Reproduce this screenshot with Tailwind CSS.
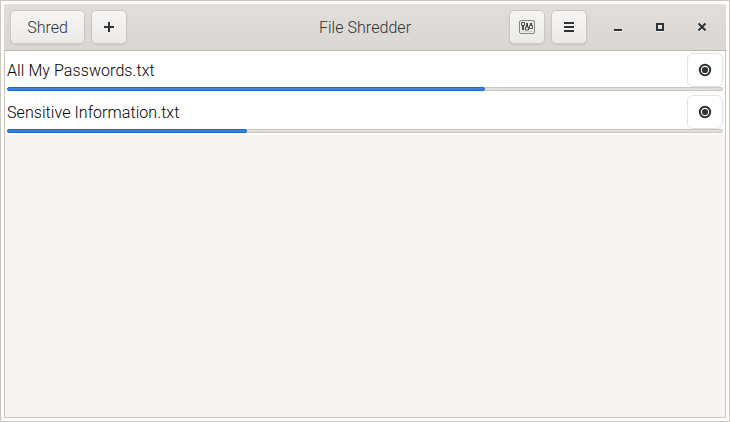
<!DOCTYPE html>
<html lang="en">
<head>
<meta charset="utf-8">
<title>File Shredder</title>
<script src="https://cdn.jsdelivr.net/npm/@tailwindcss/browser@4"></script>
</head>
<body class="h-[422px] w-[730px] overflow-hidden border border-[#cdc7c2] bg-white p-[3px] font-['Roboto',sans-serif] text-base font-light">
<div class="flex h-[414px] w-[722px] flex-col">
  <header class="grid h-[47px] shrink-0 grid-cols-[1fr_auto_1fr] items-center border-b border-[#bfb8b1] bg-linear-to-b from-[#e1dedb] to-[#dad6d2] px-[6px] text-[#2e3436]">
    <div class="flex gap-[6px]">
      <button class="h-[34px] w-[75px] rounded-[5px] border border-[#d5c5c1] bg-linear-to-b from-[#f6f5f4] to-[#edebe9] pt-px leading-none shadow-[0_1px_2px_rgba(0,0,0,0.08)]">Shred</button>
      <button aria-label="Add" class="flex h-[34px] w-9 items-center justify-center rounded-[5px] border border-[#cdc7c2] bg-linear-to-b from-[#f6f5f4] to-[#edebe9] shadow-[0_1px_2px_rgba(0,0,0,0.08)]">
        <svg width="16" height="16" shape-rendering="crispEdges"><path fill="#2e3436" d="M7 3h2v4h4v2H9v4H7V9H3V7h4z"/></svg>
      </button>
    </div>
    <h1 class="pt-[2px] leading-none tracking-[0.05px]">File Shredder</h1>
    <div class="flex items-center justify-end">
      <button aria-label="Settings" class="mr-[6px] flex h-[34px] w-9 items-center justify-center rounded-[5px] border border-[#cdc7c2] bg-linear-to-b from-[#f6f5f4] to-[#edebe9] shadow-[0_1px_2px_rgba(0,0,0,0.08)]">
        <svg width="16" height="16" fill="none"><rect x=".5" y="1.5" width="15" height="13" rx="1.5" fill="#eeeeec" stroke="#858782"/><path d="M2 12.5h12" stroke="#d8d9d5"/><g stroke="#4b4d49"><path d="M4 6v5M8 4v4M12 4v3" stroke-width="2"/><path d="M2.5 3.5h3v3h-3zM6.5 8h3v3h-3zM10.5 6.5h3v3h-3z" fill="#eeeeec"/></g></svg>
      </button>
      <button aria-label="Menu" class="flex h-[34px] w-9 items-center justify-center rounded-[5px] border border-[#cdc7c2] bg-linear-to-b from-[#f6f5f4] to-[#edebe9] shadow-[0_1px_2px_rgba(0,0,0,0.08)]">
        <svg width="16" height="16" shape-rendering="crispEdges"><path fill="#2e3436" d="M3 3h10v2H3zM3 7h10v2H3zM3 11h10v2H3z"/></svg>
      </button>
      <div class="mr-[10px] ml-[23px] flex gap-[26px]">
        <svg width="16" height="16" shape-rendering="crispEdges"><path fill="#fff" fill-opacity=".7" d="M4 12h8v1H4z"/><path fill="#2e3436" d="M4 10h8v2H4z"/></svg>
        <svg width="16" height="16" shape-rendering="crispEdges"><path fill="#fff" fill-opacity=".7" d="M4 12h8v1H4zM6 6h4v1H6z"/><path fill="#2e3436" fill-rule="evenodd" d="M4 4h8v8H4zM6 6v4h4V6z"/></svg>
        <svg width="16" height="16"><path stroke="#fff" stroke-opacity=".7" stroke-width="2" d="m4.7 5.7 6.6 6.6m0-6.6-6.6 6.6"/><path stroke="#2e3436" stroke-width="2.1" d="m4.5 4.5 7 7m0-7-7 7"/></svg>
      </div>
    </div>
  </header>
  <main class="grow border-x border-b border-[#cdc7c2] bg-[#f6f5f4] text-black">
    <ul class="bg-white">
      <li class="flex h-[42px] flex-col px-[2px] pt-[2px]">
        <div class="flex h-[34px] items-center justify-between"><span class="pt-[2px] tracking-[0.08px]">All My Passwords.txt</span>
          <button aria-label="Stop" class="flex h-[34px] w-9 items-center justify-center rounded-[6px] border border-[#e3e1df]"><svg width="16" height="16"><circle cx="8" cy="8" r="5.2" fill="none" stroke="#2e3436" stroke-width="2"/><circle cx="8" cy="8" r="3.1" fill="#2e3436"/></svg></button></div>
        <div class="flex h-1 rounded-[2px] border border-[#cdc7c2] bg-[#e1dedb]"><div class="-m-px h-1 w-[478px] rounded-[2px] border border-[#1b6acb] bg-[#3584e4]"></div></div>
      </li>
      <li class="flex h-[42px] flex-col px-[2px] pt-[2px]">
        <div class="flex h-[34px] items-center justify-between"><span class="pt-[2px] tracking-[0.07px]">Sensitive Information.txt</span>
          <button aria-label="Stop" class="flex h-[34px] w-9 items-center justify-center rounded-[6px] border border-[#e3e1df]"><svg width="16" height="16"><circle cx="8" cy="8" r="5.2" fill="none" stroke="#2e3436" stroke-width="2"/><circle cx="8" cy="8" r="3.1" fill="#2e3436"/></svg></button></div>
        <div class="flex h-1 rounded-[2px] border border-[#cdc7c2] bg-[#e1dedb]"><div class="-m-px h-1 w-[240px] rounded-[2px] border border-[#1b6acb] bg-[#3584e4]"></div></div>
      </li>
    </ul>
  </main>
</div>
</body>
</html>
